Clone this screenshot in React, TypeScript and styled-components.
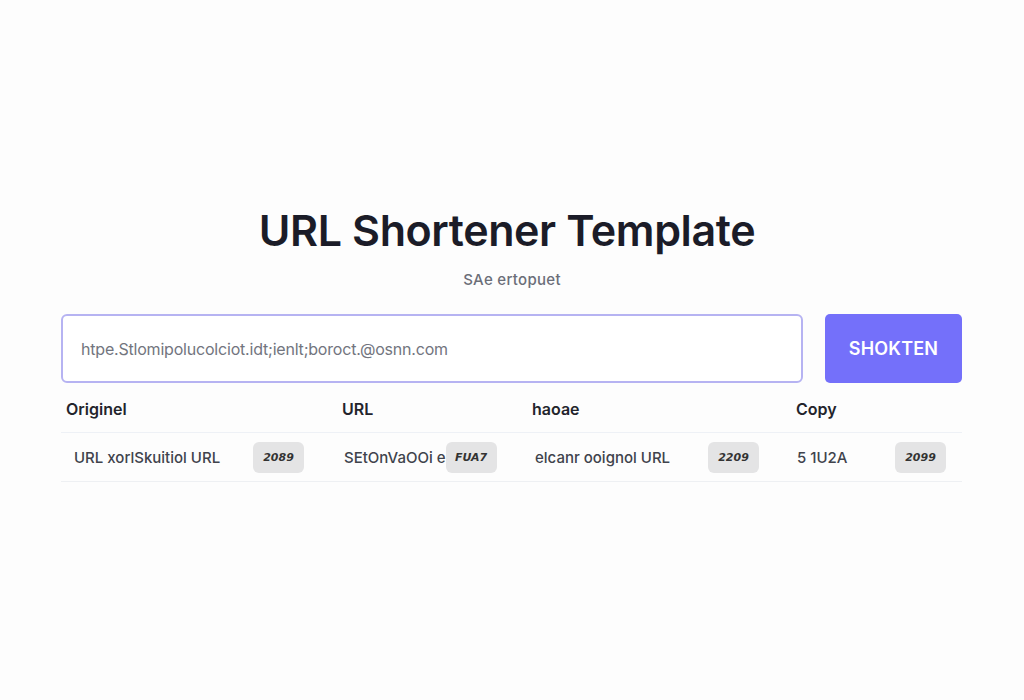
import React from "react";
import styled, { createGlobalStyle } from "styled-components";

const Global = createGlobalStyle`
  html, body { margin: 0; padding: 0; background: #fdfdfd; }
  body { font-family: "Inter", "Lato", sans-serif; }
  * { box-sizing: border-box; }
`;

const Page = styled.main`
  min-height: 700px;
  padding-top: 204px;
  display: flex;
  flex-direction: column;
  align-items: center;
`;

const Title = styled.h1`
  margin: 0 10px 0 0;
  font-size: 43px;
  line-height: 53px;
  font-weight: 600;
  color: #1b1c28;
  letter-spacing: -0.4px;
`;

const Subtitle = styled.p`
  margin: 13px 0 0;
  font-size: 15px;
  line-height: 20px;
  font-weight: 500;
  color: #6b6e78;
  letter-spacing: 0.3px;
`;

const Container = styled.section`
  width: 901px;
  margin: 24px 1px 0 0;
`;

const Form = styled.form`
  display: flex;
  gap: 22px;
  height: 69px;
`;

const UrlInput = styled.input`
  flex: 1;
  height: 100%;
  border: 2px solid #b6b3f2;
  border-radius: 6px;
  padding: 0 18px;
  font-family: "Inter", sans-serif;
  font-size: 16px;
  letter-spacing: -0.2px;
  color: #6d7079;
  background: #fff;
  outline: none;
  &::placeholder { color: #72757e; }
`;

const Button = styled.button`
  width: 137px;
  height: 100%;
  border: none;
  border-radius: 5px;
  background: #7470fa;
  color: #fff;
  font-family: "Inter", sans-serif;
  font-size: 18px;
  font-weight: 600;
  letter-spacing: 0.2px;
`;

const Grid = styled.div`
  display: grid;
  grid-template-columns: 272px 190px 264px 175px;
`;

const HeaderRow = styled(Grid)`
  margin-top: 8px;
  height: 42px;
  padding-bottom: 5px;
  align-items: center;
  border-bottom: 1px solid #eef1f6;
`;

const HeaderCell = styled.div<{ $pad: number }>`
  padding-left: ${(p) => p.$pad}px;
  font-size: 16px;
  font-weight: 600;
  color: #23242c;
`;

const BodyRow = styled(Grid)`
  height: 49px;
  align-items: center;
  border-bottom: 1px solid #eef0f3;
`;

const Cell = styled.div<{ $pad: number; $right: number }>`
  display: flex;
  align-items: center;
  justify-content: space-between;
  padding-left: ${(p) => p.$pad}px;
  padding-right: ${(p) => p.$right}px;
  font-size: 15px;
  font-weight: 500;
  color: #40434c;
  white-space: nowrap;
`;

const Badge = styled.span`
  width: 51px;
  height: 31px;
  border-radius: 6px;
  background: #e4e4e5;
  display: inline-flex;
  align-items: center;
  justify-content: center;
  font-family: "DejaVu Sans", sans-serif;
  font-size: 11px;
  font-weight: 700;
  font-style: italic;
  color: #333;
  flex-shrink: 0;
`;

const headers = [
  { label: "Originel", pad: 5 },
  { label: "URL", pad: 9 },
  { label: "haoae", pad: 9 },
  { label: "Copy", pad: 9 },
];

const cells = [
  { text: "URL xorlSkuitiol URL", badge: "2089", pad: 13, right: 29 },
  { text: "SEtOnVaOOi e", badge: "FUA7", pad: 11, right: 29 },
  { text: "elcanr ooignol URL", badge: "2209", pad: 12, right: 28 },
  { text: "5 1U2A", badge: "2099", pad: 10, right: 16 },
];

export default function App() {
  return (
    <>
      <Global />
      <Page>
        <Title>URL Shortener Template</Title>
        <Subtitle>SAe ertopuet</Subtitle>
        <Container>
          <Form onSubmit={(e) => e.preventDefault()}>
            <UrlInput
              readOnly
              placeholder="htpe.Stlomipolucolciot.idt;ienlt;boroct.@osnn.com"
            />
            <Button type="submit">SHOKTEN</Button>
          </Form>
          <HeaderRow>
            {headers.map((h) => (
              <HeaderCell key={h.label} $pad={h.pad}>
                {h.label}
              </HeaderCell>
            ))}
          </HeaderRow>
          <BodyRow>
            {cells.map((c) => (
              <Cell key={c.badge} $pad={c.pad} $right={c.right}>
                <span>{c.text}</span>
                <Badge>{c.badge}</Badge>
              </Cell>
            ))}
          </BodyRow>
        </Container>
      </Page>
    </>
  );
}
